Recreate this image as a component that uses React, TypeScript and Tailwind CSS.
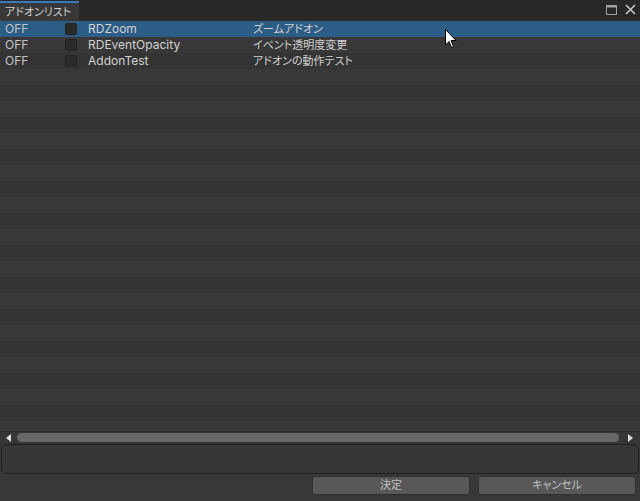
import React from "react";

const rows = [
  { name: "RDZoom", desc: "ズームアドオン" },
  { name: "RDEventOpacity", desc: "イベント透明度変更" },
  { name: "AddonTest", desc: "アドオンの動作テスト" },
];

const font = { fontFamily: 'Inter, "Noto Sans CJK JP", sans-serif' };

export default function App() {
  const total = 26;
  return (
    <div
      className="relative w-[640px] h-[501px] bg-[#383838] flex flex-col overflow-hidden text-[#c4c4c4] [font-feature-settings:'palt']"
      style={font}
    >
      {/* header */}
      <div className="h-[21px] bg-[#282828] flex items-end shrink-0">
        <div className="w-[79px] h-[20px] bg-[#383838] border-t-2 border-[#3a79bb] flex items-center pl-[5px] text-[11px] text-[#d2d2d2] leading-none whitespace-nowrap">
          アドオンリスト
        </div>
        <div className="flex-1" />
        <div className="flex items-center gap-[8px] h-[21px] pr-[4px] pb-[2px]">
          <svg width="11" height="10" viewBox="0 0 11 10">
            <rect x="0.5" y="0.5" width="10" height="9" fill="none" stroke="#a0a0a0" />
            <rect x="0.5" y="0.5" width="10" height="2" fill="#a0a0a0" />
          </svg>
          <svg width="11" height="11" viewBox="0 0 11 11">
            <path d="M1 1 L10 10 M10 1 L1 10" stroke="#c8c8c8" strokeWidth="1.6" />
          </svg>
        </div>
      </div>

      {/* list */}
      <div className="h-[410px] shrink-0 flex flex-col overflow-hidden">
        {Array.from({ length: total }).map((_, i) => {
          const r = rows[i];
          const bg =
            i === 0 ? "bg-[#2c5d87]" : i % 2 === 1 ? "bg-[#383838]" : "bg-[#343434]";
          return (
            <div key={i} className={`h-[16px] shrink-0 flex items-center ${bg}`}>
              {r && (
                <>
                  <div className="w-[65px] pl-[5px] text-[12px] leading-none text-[#c4c4c4]">OFF</div>
                  <div className="w-[12px] h-[12px] bg-[#2a2a2a] border border-[#222222] rounded-[2px]" />
                  <div className="w-[176px] pl-[11px] text-[12px] leading-none text-[#d2d2d2]">{r.name}</div>
                  <div className="text-[11px] leading-none text-[#d2d2d2] whitespace-nowrap">{r.desc}</div>
                </>
              )}
            </div>
          );
        })}
      </div>

      {/* scrollbar */}
      <div className="h-[12px] shrink-0 bg-[#363636] border-t border-[#2a2a2a] flex items-center">
        <div className="w-[17px] flex justify-center">
          <svg width="6" height="8" viewBox="0 0 6 8">
            <path d="M5 0 L0 4 L5 8 Z" fill="#e0e0e0" />
          </svg>
        </div>
        <div className="flex-1 h-[9px] rounded-full bg-[#676767]" />
        <div className="w-[21px] flex justify-center">
          <svg width="6" height="8" viewBox="0 0 6 8">
            <path d="M1 0 L6 4 L1 8 Z" fill="#e0e0e0" />
          </svg>
        </div>
      </div>

      {/* text box */}
      <div className="px-[1px] pt-[1px] shrink-0">
        <div className="h-[30px] rounded-[5px] border border-[#1f1f1f] bg-[#373737]" />
      </div>

      {/* buttons */}
      <div className="flex justify-end gap-[8px] pt-[2px] pr-[4px] shrink-0">
        <button className="w-[158px] h-[19px] rounded-[3px] bg-[#585858] border border-[#303030] text-[11px] leading-none text-[#c0c0c0]">
          決定
        </button>
        <button className="w-[158px] h-[19px] rounded-[3px] bg-[#585858] border border-[#303030] text-[11px] leading-none text-[#c0c0c0]">
          キャンセル
        </button>
      </div>

      {/* cursor */}
      <svg
        className="absolute left-[445px] top-[29px]"
        width="13"
        height="20"
        viewBox="0 0 13 20"
      >
        <path
          d="M0.5 0.5 L0.5 16 L4 12.5 L6.5 18.5 L8.5 17.5 L6 11.5 L11 11.5 Z"
          fill="#ffffff"
          stroke="#000000"
          strokeWidth="1"
        />
      </svg>
    </div>
  );
}
